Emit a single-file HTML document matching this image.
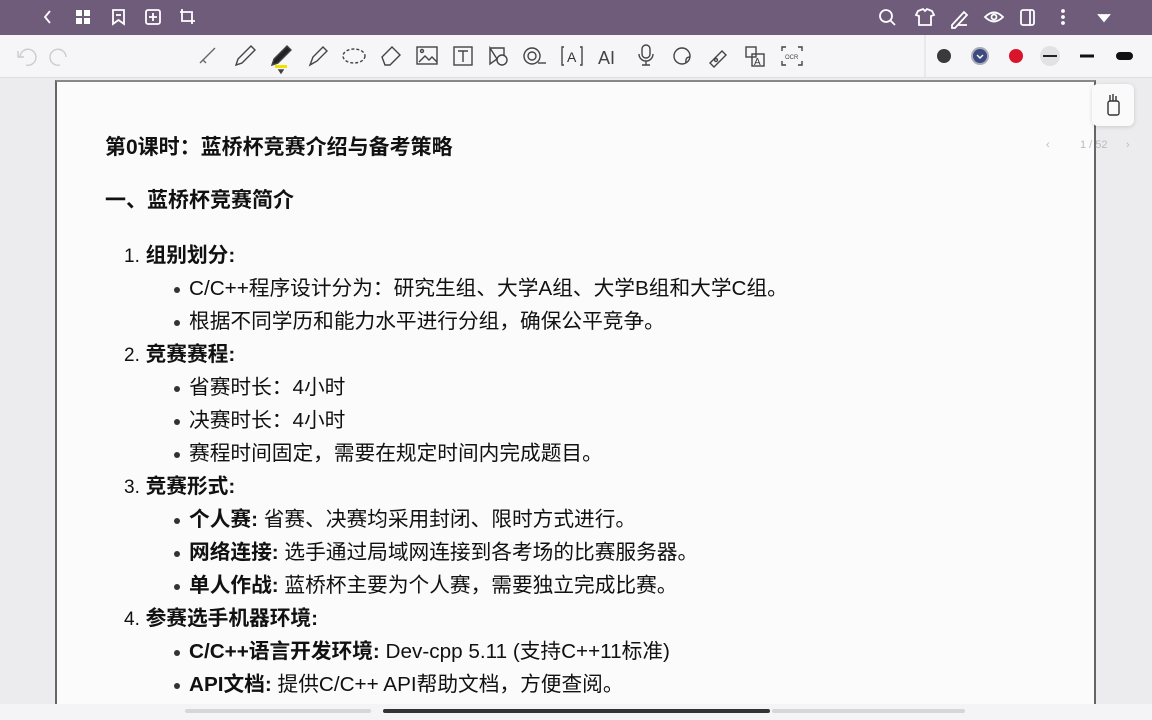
<!DOCTYPE html>
<html><head><meta charset="utf-8"><style>
*{margin:0;padding:0;box-sizing:border-box}
body{width:1152px;height:720px;overflow:hidden;background:#ececee;font-family:"Liberation Sans","Noto Sans CJK SC",sans-serif;position:relative;color:#111}
.top{position:absolute;left:0;top:0;width:1152px;height:35px;background:#6f5c7b}
.tb{position:absolute;left:0;top:35px;width:1152px;height:43px;background:#f6f6f8;border-bottom:1px solid #dedee2}
.page{position:absolute;left:55px;top:80px;width:1041px;height:640px;background:#fbfbfb;border-left:2px solid #666;border-right:2px solid #666;border-top:2px solid #888}
.t{position:absolute;white-space:nowrap;font-size:20.7px;line-height:24px}
.h{font-size:21px}
.b{font-weight:bold}
.dot{position:absolute;width:6px;height:6px;border-radius:50%;background:#333}
.bot{position:absolute;left:0;top:704px;width:1152px;height:16px;background:#f4f4f6}
svg{position:absolute}
</style></head><body>
<div class="top"></div>
<svg style="left:0;top:0" width="1152" height="35" fill="none" stroke="#fff" stroke-width="1.8">
<path d="M50 11l-5 6 5 6"/>
<rect x="76" y="10" width="6" height="6" fill="#fff" stroke="none"/><rect x="84" y="10" width="6" height="6" fill="#fff" stroke="none"/><rect x="76" y="18" width="6" height="6" fill="#fff" stroke="none"/><rect x="84" y="18" width="6" height="6" fill="#fff" stroke="none"/>
<path d="M113 10h11v14l-5.5-4-5.5 4z"/><path d="M116 15h5"/>
<rect x="146" y="10" width="14" height="14" rx="2"/><path d="M153 13v8M149 17h8"/>
<path d="M182 9v12h13M180 12h12v12"/>
<circle cx="886" cy="16" r="6"/><path d="M890 20l5 5"/>
<path d="M918 11l5-2 2 2 2-2 5 2 2 4-3 1v9h-12v-9l-3-1z"/>
<path d="M952 25l12-13 3 3-12 13h-3zM958 25h9"/>
<path d="M985 17q9-9 18 0q-9 9-18 0z"/><circle cx="994" cy="17" r="2.5"/>
<rect x="1021" y="10" width="13" height="15" rx="2"/><path d="M1030 10v15"/>
<circle cx="1063" cy="11" r="1" fill="#fff"/><circle cx="1063" cy="17" r="1" fill="#fff"/><circle cx="1063" cy="23" r="1" fill="#fff"/>
<path d="M1099 15h10l-5 6z" fill="#fff"/>
</svg>
<div class="tb"></div>
<svg style="left:0;top:35px" width="1152" height="43" fill="none" stroke="#444" stroke-width="1.4">
<g stroke="#ccc"><path d="M20 22a8 8 0 1 1 6 8M18 16v6h6"/><path d="M66 22a8 8 0 1 0-6 8"/></g>
<path d="M200 28l15-15M203 25l3 3" stroke="#666"/>
<path d="M236 30l2-6 13-13 4 4-13 13z"/>
<path d="M272 30l2-6 13-13 4 4-13 13z" fill="#222"/><rect x="275" y="30" width="12" height="3" fill="#f2e000" stroke="none"/><path d="M279 35h4l-2 3z" fill="#222"/>
<path d="M310 30l3-8 10-10 4 4-10 10z"/>
<ellipse cx="354" cy="21" rx="11" ry="7" stroke-dasharray="3 2"/>
<path d="M382 22l10-10 8 8-10 10h-5z"/>
<rect x="417" y="12" width="20" height="17"/><path d="M419 27l6-6 4 4 3-3 5 5"/><circle cx="422" cy="16" r="1.5"/>
<rect x="454" y="12" width="18" height="18"/><path d="M458 16h10M463 16v11"/>
<path d="M490 13h14v8M490 13v16l7-5z"/><circle cx="502" cy="25" r="5"/>
<circle cx="532" cy="21" r="8"/><circle cx="532" cy="21" r="4"/><path d="M538 28h8"/>
<path d="M564 12h-2v18h2M580 12h2v18h-2"/><text x="567" y="27" font-size="14" fill="#333" stroke="none" font-family="Liberation Sans">A</text>
<text x="598" y="29" font-size="18" fill="#444" stroke="none" font-family="Liberation Sans">AI</text>
<rect x="642" y="10" width="8" height="13" rx="4"/><path d="M639 19a7 7 0 0 0 14 0M646 26v4M642 30h8"/>
<circle cx="682" cy="21" r="8"/><path d="M686 28q-1-6 4-6"/>
<path d="M710 28l12-12 4 4-12 12z"/><circle cx="716" cy="25" r="1.5"/>
<rect x="746" y="12" width="10" height="10"/><rect x="752" y="19" width="12" height="12"/><text x="754" y="30" font-size="10" fill="#333" stroke="none">A</text>
<path d="M782 16v-4h4M798 12h4v4M802 26v4h-4M786 30h-4v-4"/><text x="785" y="24" font-size="6" fill="#444" stroke="none">OCR</text>
<path d="M925 0v43" stroke="#e4e4e6"/>
<circle cx="944" cy="21" r="7" fill="#3a3a3a" stroke="none"/>
<circle cx="980" cy="21" r="8" fill="#3b4a80" stroke="#aab" stroke-width="2"/><path d="M977 20l3 3 3-3" stroke="#fff"/>
<circle cx="1016" cy="21" r="7" fill="#d9142c" stroke="none"/>
<circle cx="1050" cy="21" r="10" fill="#e2e2e4" stroke="none"/><path d="M1043 21h14" stroke="#222" stroke-width="2"/>
<path d="M1080 21h14" stroke="#111" stroke-width="3"/>
<path d="M1120 21h9" stroke="#111" stroke-width="8" stroke-linecap="round"/>
</svg>
<div class="page"></div>
<div style="position:absolute;left:1092px;top:84px;width:42px;height:42px;background:#fafafa;border-radius:6px;box-shadow:0 1px 4px rgba(0,0,0,.15)"></div>
<svg style="left:1104px;top:92px" width="20" height="26" fill="none" stroke="#333" stroke-width="1.4"><rect x="4" y="9" width="11" height="14" rx="2"/><path d="M6 9V3M9 9V2M12 9V4"/></svg>
<div style="position:absolute;left:1038px;top:134px;width:108px;height:22px;color:#bbb;font-size:11px;line-height:22px"><span style="position:absolute;left:8px">‹</span><span style="position:absolute;left:42px">1 / 52</span><span style="position:absolute;left:88px">›</span></div>

<div class="t b h" style="left:105px;top:136px">第0课时：蓝桥杯竞赛介绍与备考策略</div>
<div class="t b h" style="left:105px;top:189px">一、蓝桥杯竞赛简介</div>

<div class="t" style="left:124px;top:244px"><span style="font-size:19px">1.</span> <b>组别划分:</b></div>
<div class="dot" style="left:174px;top:287px"></div><div class="t" style="left:189px;top:277px">C/C++程序设计分为：研究生组、大学A组、大学B组和大学C组。</div>
<div class="dot" style="left:174px;top:320px"></div><div class="t" style="left:189px;top:310px">根据不同学历和能力水平进行分组，确保公平竞争。</div>

<div class="t" style="left:124px;top:343px"><span style="font-size:19px">2.</span> <b>竞赛赛程:</b></div>
<div class="dot" style="left:174px;top:386px"></div><div class="t" style="left:189px;top:376px">省赛时长：4小时</div>
<div class="dot" style="left:174px;top:419px"></div><div class="t" style="left:189px;top:409px">决赛时长：4小时</div>
<div class="dot" style="left:174px;top:452px"></div><div class="t" style="left:189px;top:442px">赛程时间固定，需要在规定时间内完成题目。</div>

<div class="t" style="left:124px;top:475px"><span style="font-size:19px">3.</span> <b>竞赛形式:</b></div>
<div class="dot" style="left:174px;top:518px"></div><div class="t" style="left:189px;top:508px"><b>个人赛:</b> 省赛、决赛均采用封闭、限时方式进行。</div>
<div class="dot" style="left:174px;top:551px"></div><div class="t" style="left:189px;top:541px"><b>网络连接:</b> 选手通过局域网连接到各考场的比赛服务器。</div>
<div class="dot" style="left:174px;top:584px"></div><div class="t" style="left:189px;top:574px"><b>单人作战:</b> 蓝桥杯主要为个人赛，需要独立完成比赛。</div>

<div class="t" style="left:124px;top:607px"><span style="font-size:19px">4.</span> <b>参赛选手机器环境:</b></div>
<div class="dot" style="left:174px;top:650px"></div><div class="t" style="left:189px;top:640px"><b>C/C++语言开发环境:</b> Dev-cpp 5.11 (支持C++11标准)</div>
<div class="dot" style="left:174px;top:683px"></div><div class="t" style="left:189px;top:673px"><b>API文档:</b> 提供C/C++ API帮助文档，方便查阅。</div>

<div class="bot"></div>
<div style="position:absolute;left:185px;top:709px;width:186px;height:4px;background:#d6d6d8;border-radius:2px"></div>
<div style="position:absolute;left:383px;top:709px;width:387px;height:4px;background:#333;border-radius:2px"></div>
<div style="position:absolute;left:772px;top:709px;width:193px;height:4px;background:#d6d6d8;border-radius:2px"></div>
</body></html>
